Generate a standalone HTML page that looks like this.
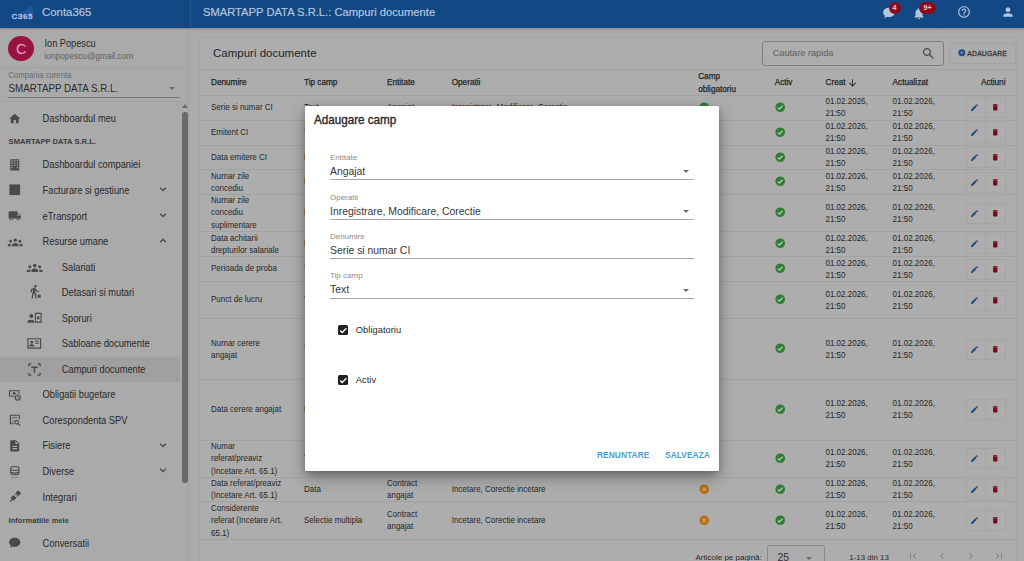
<!DOCTYPE html>
<html><head><meta charset="utf-8"><style>
*{margin:0;padding:0;box-sizing:border-box}
html,body{width:1024px;height:561px;overflow:hidden;background:#ababab;font-family:"Liberation Sans",sans-serif;color:#222}
.a{position:absolute;white-space:nowrap}
svg{position:absolute;overflow:visible}
#hdr{position:absolute;left:0;top:0;width:1024px;height:28px;background:#124884;box-shadow:0 1px 2px rgba(0,0,0,.22);z-index:2}
.hsep{position:absolute;top:0;width:1px;height:28px;background:#2a5689}
.ht{color:#b4c6de;-webkit-text-stroke:0.2px #b4c6de}
#side{position:absolute;left:0;top:28px;width:189px;height:533px;background:#aaaaaa;border-right:1px solid #a2a2a2}
.mi{position:absolute;left:42.6px;font-size:9.3px;line-height:12px;color:#282828;white-space:nowrap;transform:scaleY(1.13);transform-origin:50% 50%}
.si{position:absolute;left:61.8px;font-size:9.3px;line-height:12px;color:#282828;white-space:nowrap;transform:scaleY(1.13);transform-origin:50% 50%}
.sec{position:absolute;left:8.6px;font-size:7.6px;line-height:10px;font-weight:bold;color:#3c3c3c;white-space:nowrap}
#card{position:absolute;left:200px;top:38px;width:816px;height:530px;background:#adadad;box-shadow:0 0 1px rgba(0,0,0,.2)}
.hl{position:absolute;height:1px;background:#a2a2a2}
.th{position:absolute;font-size:8.2px;line-height:12px;font-weight:normal;-webkit-text-stroke:0.25px #262626;color:#262626;white-space:nowrap}
.td{position:absolute;font-size:8px;line-height:12px;color:#2a2a2a;white-space:nowrap}
.tdc{line-height:11px;transform:scaleY(1.13);transform-origin:50% 50%;color:#262626}
.act{position:absolute;left:966px;width:40px;height:21px;border:1px solid #a4a4a4;border-radius:2px}
.act i{position:absolute;left:17.5px;top:0;width:1px;height:19px;background:#a4a4a4}
#modal{position:absolute;left:305px;top:106px;width:414.2px;height:365px;background:#fff;border-radius:1.5px;box-shadow:0 6px 16px rgba(0,0,0,.35),0 2px 5px rgba(0,0,0,.2)}
.ml{position:absolute;left:25px;font-size:8px;line-height:10px;color:#8a8a8a;white-space:nowrap}
.mv{position:absolute;left:25px;font-size:10.4px;line-height:14px;color:#363636;white-space:nowrap}
.mu{position:absolute;left:25px;width:364px;height:1px;background:#a6a6a6}
.arr{position:absolute;left:378.3px;width:0;height:0;border-left:3.5px solid transparent;border-right:3.5px solid transparent;border-top:3.5px solid #6a6a6a}
</style></head><body>
<div id="hdr">
<svg style="left:11px;top:5px" width="23" height="15" viewBox="0 0 23 15">
<path fill="#1b58a2" d="M5 8.5q6-1 10-4t7-4V8.5z"/>
<text x="0.6" y="14.2" font-family="Liberation Sans" font-weight="bold" font-size="8.1" fill="#b4b8ec" stroke="#b4b8ec" stroke-width="0.3" textLength="21" lengthAdjust="spacing">C365</text></svg>
<div class="a ht" style="left:42px;top:5px;font-size:11.4px;line-height:14px">Conta365</div>
<div class="hsep" style="left:189.5px"></div>
<div class="a ht" style="left:203px;top:5px;font-size:11.2px;line-height:14px">SMARTAPP DATA S.R.L.: Campuri documente</div>
<svg style="left:882px;top:6px" width="14" height="14" viewBox="0 0 24 24"><path fill="#b4c6de" d="M12 3C6.5 3 2 6.6 2 11c0 2.3 1.2 4.3 3.1 5.8L4 21l4.6-2.4c1.1.3 2.2.4 3.4.4 5.5 0 10-3.6 10-8S17.5 3 12 3z"/></svg>
<div class="a" style="left:888.5px;top:2px;width:12px;height:11.5px;border-radius:6px;background:#8a0b1c;color:#e4cdd2;font-size:7.2px;font-weight:bold;line-height:11.5px;text-align:center">4</div>
<svg style="left:912px;top:6px" width="14" height="15" viewBox="0 0 24 24"><path fill="#b4c6de" d="M12 22c1.1 0 2-.9 2-2h-4c0 1.1.9 2 2 2zm6-6v-5c0-3.1-1.6-5.6-4.5-6.3V4c0-.8-.7-1.5-1.5-1.5s-1.5.7-1.5 1.5v.7C7.6 5.4 6 7.9 6 11v5l-2 2v1h16v-1l-2-2z"/></svg>
<div class="a" style="left:919.3px;top:2px;width:16.8px;height:11.5px;border-radius:6px;background:#8a0b1c;color:#e4cdd2;font-size:7.2px;font-weight:bold;line-height:11.5px;text-align:center">9+</div>
<div class="hsep" style="left:943px;background:#194c86"></div>
<svg style="left:957px;top:5px" width="14" height="14" viewBox="0 0 24 24"><path fill="#b4c6de" d="M11 18h2v-2h-2v2zm1-16C6.5 2 2 6.5 2 12s4.5 10 10 10 10-4.5 10-10S17.5 2 12 2zm0 18c-4.4 0-8-3.6-8-8s3.6-8 8-8 8 3.6 8 8-3.6 8-8 8zm0-14c-2.2 0-4 1.8-4 4h2c0-1.1.9-2 2-2s2 .9 2 2c0 2-3 1.8-3 5h2c0-2.3 3-2.5 3-5 0-2.2-1.8-4-4-4z"/></svg>
<div class="hsep" style="left:987px;background:#194c86"></div>
<svg style="left:1001px;top:5px" width="14" height="14" viewBox="0 0 24 24"><path fill="#b4c6de" d="M12 12c2.2 0 4-1.8 4-4s-1.8-4-4-4-4 1.8-4 4 1.8 4 4 4zm0 2c-2.7 0-8 1.3-8 4v2h16v-2c0-2.7-5.3-4-8-4z"/></svg>
</div>
<div id="side"></div>
<div class="a" style="left:8.4px;top:35.8px;width:25.5px;height:25.5px;border-radius:50%;background:#9a1240;color:#dca6c4;font-size:14.5px;line-height:27px;text-align:center">C</div>
<div class="mi" style="left:44.5px;top:38.30px;font-size:9.2px">Ion Popescu</div>
<div class="mi" style="left:44.5px;top:49.50px;font-size:8.3px;color:#606060">ionpopescu@gmail.com</div>
<div class="hl" style="left:0;top:67px;width:189px"></div>
<div class="mi" style="left:8.5px;top:70.30px;font-size:7.7px;color:#6a6a6a">Compania curenta</div>
<div class="mi" style="left:8.5px;top:83.40px;font-size:9.8px;color:#2a2a2a">SMARTAPP DATA S.R.L.</div>
<div class="arr" style="left:168.5px;top:87.3px"></div>
<div class="hl" style="left:8px;top:97px;width:172px;background:#7a7a7a"></div>
<div class="hl" style="left:0;top:101px;width:189px"></div>
<div class="a" style="left:181.8px;top:103.5px;width:0;height:0;border-left:3px solid transparent;border-right:3px solid transparent;border-bottom:4px solid #6a6a6a"></div>
<div class="a" style="left:182.3px;top:112px;width:5.6px;height:371px;border-radius:2.8px;background:#6a6a6a"></div>
<div class="a" style="left:0;top:356.6px;width:180px;height:25.6px;background:#a0a0a0"></div>
<div class="mi" style="left:42.6px;top:113.30px;">Dashboardul meu</div>
<svg style="left:8.45px;top:111.85px" width="13.5" height="13.5" viewBox="0 0 24 24"><path fill="#4a4a4a" fill-rule="evenodd" d="M10 20v-6h4v6h5v-8h3L12 3 2 12h3v8z"/></svg>
<div class="sec" style="left:8.6px;top:137.25px;">SMARTAPP DATA S.R.L.</div>
<div class="mi" style="left:42.6px;top:159.30px;">Dashboardul companiei</div>
<svg style="left:8.45px;top:157.85px" width="13.5" height="13.5" viewBox="0 0 24 24"><path fill="#4a4a4a" fill-rule="evenodd" d="M4 2h16v20H4z M6 4v2h2.5V4z M10.75 4v2h2.5V4z M15.5 4v2H18V4z M6 8v2h2.5V8z M10.75 8v2h2.5V8z M15.5 8v2H18V8z M6 12v2h2.5v-2z M10.75 12v2h2.5v-2z M15.5 12v2H18v-2z M6 16v2h2.5v-2z M15.5 16v2H18v-2z"/></svg>
<div class="mi" style="left:42.6px;top:184.70px;">Facturare si gestiune</div>
<svg style="left:8.45px;top:183.25px" width="13.5" height="13.5" viewBox="0 0 24 24"><path fill="#4a4a4a" fill-rule="evenodd" d="M2.5 2.5h19v19h-19z"/></svg>
<svg style="left:158.3px;top:184.00px" width="10" height="12" viewBox="0 0 12 12"><path fill="none" stroke="#4e4e4e" stroke-width="1.7" d="M2.5 3.2l3.5 3.5 3.5-3.5"/></svg>
<div class="mi" style="left:42.6px;top:210.50px;">eTransport</div>
<svg style="left:8.45px;top:209.05px" width="13.5" height="13.5" viewBox="0 0 24 24"><path fill="#4a4a4a" fill-rule="evenodd" d="M20 8h-3V4H3c-1.1 0-2 .9-2 2v11h2c0 1.7 1.3 3 3 3s3-1.3 3-3h6c0 1.7 1.3 3 3 3s3-1.3 3-3h2v-5l-3-4zM6 18.5c-.8 0-1.5-.7-1.5-1.5s.7-1.5 1.5-1.5 1.5.7 1.5 1.5-.7 1.5-1.5 1.5zm13.5-9l2 2.5H17V9.5h2.5zm-1.5 9c-.8 0-1.5-.7-1.5-1.5s.7-1.5 1.5-1.5 1.5.7 1.5 1.5-.7 1.5-1.5 1.5z"/></svg>
<svg style="left:158.3px;top:209.80px" width="10" height="12" viewBox="0 0 12 12"><path fill="none" stroke="#4e4e4e" stroke-width="1.7" d="M2.5 3.2l3.5 3.5 3.5-3.5"/></svg>
<div class="mi" style="left:42.6px;top:235.90px;">Resurse umane</div>
<svg style="left:7.25px;top:232.95px" width="16.5" height="16.5" viewBox="0 0 24 24"><path fill="#4a4a4a" fill-rule="evenodd" d="M12 7.9a2.5 2.5 0 1 1 0 5 2.5 2.5 0 0 1 0-5zM5.3 9.9a2.1 2.1 0 1 1 0 4.2 2.1 2.1 0 0 1 0-4.2zM18.7 9.9a2.1 2.1 0 1 1 0 4.2 2.1 2.1 0 0 1 0-4.2zM7.2 19.3v-1.2c0-2.1 2.1-3.6 4.8-3.6s4.8 1.5 4.8 3.6v1.2zM1 19.3v-.9c0-1.4 1.4-2.6 3.6-2.6.6 0 1.2.1 1.7.3-.5.6-.8 1.4-.8 2.3v.9zM23 19.3v-.9c0-1.4-1.4-2.6-3.6-2.6-.6 0-1.2.1-1.7.3.5.6.8 1.4.8 2.3v.9z"/></svg>
<svg style="left:158.3px;top:235.20px" width="10" height="12" viewBox="0 0 12 12"><path fill="none" stroke="#4e4e4e" stroke-width="1.7" d="M2.5 7.5l3.5-3.5 3.5 3.5"/></svg>
<div class="si" style="left:61.8px;top:261.50px;">Salariati</div>
<svg style="left:26.15px;top:258.05px" width="17.5" height="17.5" viewBox="0 0 24 24"><path fill="#4a4a4a" fill-rule="evenodd" d="M12 7.9a2.5 2.5 0 1 1 0 5 2.5 2.5 0 0 1 0-5zM5.3 9.9a2.1 2.1 0 1 1 0 4.2 2.1 2.1 0 0 1 0-4.2zM18.7 9.9a2.1 2.1 0 1 1 0 4.2 2.1 2.1 0 0 1 0-4.2zM7.2 19.3v-1.2c0-2.1 2.1-3.6 4.8-3.6s4.8 1.5 4.8 3.6v1.2zM1 19.3v-.9c0-1.4 1.4-2.6 3.6-2.6.6 0 1.2.1 1.7.3-.5.6-.8 1.4-.8 2.3v.9zM23 19.3v-.9c0-1.4-1.4-2.6-3.6-2.6-.6 0-1.2.1-1.7.3.5.6.8 1.4.8 2.3v.9z"/></svg>
<div class="si" style="left:61.8px;top:286.60px;">Detasari si mutari</div>
<svg style="left:27.10px;top:284.40px" width="15" height="15" viewBox="0 0 24 24"><path fill="#4a4a4a" fill-rule="evenodd" d="M13.5 5.5c1.1 0 2-.9 2-2s-.9-2-2-2-2 .9-2 2 .9 2 2 2zM9.8 8.9L7 23h2.1l1.8-8 2.1 2v6h2v-7.5l-2.1-2 .6-3C14.8 12 16.8 13 19 13v-2c-1.9 0-3.5-1-4.3-2.4l-1-1.6c-.4-.6-1-1-1.7-1-.3 0-.5.1-.8.1L6 8.3V13h2V9.6l1.8-.7 M17 17h5v5h-5z"/></svg>
<div class="si" style="left:61.8px;top:312.70px;">Sporuri</div>
<svg style="left:27.10px;top:310.50px" width="15" height="15" viewBox="0 0 24 24"><path fill="#4a4a4a" fill-rule="evenodd" d="M7 4.8a3.2 3.2 0 1 1 0 6.4 3.2 3.2 0 0 1 0-6.4zM0.6 18.6v-1.4c0-2.2 3-3.4 5.6-3.4s5.4 1.2 5.4 3.4v1.4zM12.6 2.9h10.8v15.7H12.6zM14.4 4.7v12.1h7.2V4.7zM17.9 7.6l2.6 3.4-2.6 3.4-2.6-3.4z"/></svg>
<div class="si" style="left:61.8px;top:338.30px;">Sabloane documente</div>
<svg style="left:27.10px;top:336.10px" width="15" height="15" viewBox="0 0 24 24"><path fill="#4a4a4a" fill-rule="evenodd" d="M0.6 3.4h22.1v16.9H0.6zM2.4 5.2v13.3h18.5V5.2zM7.6 7.6a2.3 2.3 0 1 1 0 4.6 2.3 2.3 0 0 1 0-4.6zM3.6 16.8v-1.1c0-1.7 2.6-2.6 4-2.6s4 .9 4 2.6v1.1zM13.3 7.6h5.6v1.6h-5.6zM13.3 10.6h5.6v1.6h-5.6z"/></svg>
<div class="si" style="left:61.8px;top:363.70px;">Campuri documente</div>
<svg style="left:27.10px;top:361.50px" width="15" height="15" viewBox="0 0 24 24"><path fill="#4a4a4a" fill-rule="evenodd" d="M2 4c0-1.1.9-2 2-2h3v2H4v3H2zM17 2h3c1.1 0 2 .9 2 2v3h-2V4h-3zM2 17h2v3h3v2H4c-1.1 0-2-.9-2-2zM20 17h2v3c0 1.1-.9 2-2 2h-3v-2h3zM7 7h10v2.5h-3.8V17h-2.4V9.5H7z"/></svg>
<div class="mi" style="left:42.6px;top:389.30px;">Obligatii bugetare</div>
<svg style="left:8.45px;top:387.85px" width="13.5" height="13.5" viewBox="0 0 24 24"><g fill="none" stroke="#4a4a4a" stroke-width="2"><path d="M2.7 14.7V4.8h16.7v5.2M2.7 14.7h7.8"/><circle cx="17.2" cy="17" r="4.6"/><path stroke-width="1.6" d="M17.2 14.6v2.9h2.1"/></g><circle cx="10.9" cy="9.6" r="2.6" fill="#4a4a4a"/></svg>
<div class="mi" style="left:42.6px;top:414.70px;">Corespondenta SPV</div>
<svg style="left:8.45px;top:413.25px" width="13.5" height="13.5" viewBox="0 0 24 24"><g fill="none" stroke="#4a4a4a" stroke-width="2"><path d="M20.1 11.5V4.1H4.3v15.1h5.6"/><circle cx="15.4" cy="16.4" r="3.3"/><path d="M17.8 18.9l4 3.6"/></g><path fill="#4a4a4a" d="M8 6.9h8.8v1.7H8zM7 9.8h2.4v1.5H7zM7 14.8h2.4v1.5H7z"/></svg>
<div class="mi" style="left:42.6px;top:440.20px;">Fisiere</div>
<svg style="left:8.45px;top:438.75px" width="13.5" height="13.5" viewBox="0 0 24 24"><path fill="#4a4a4a" fill-rule="evenodd" d="M14 2H6c-1.1 0-2 .9-2 2v16c0 1.1.9 2 2 2h12c1.1 0 2-.9 2-2V8l-6-6zm2 16H8v-2h8v2zm0-4H8v-2h8v2zm-3-5V3.5L18.5 9H13z"/></svg>
<svg style="left:158.3px;top:439.50px" width="10" height="12" viewBox="0 0 12 12"><path fill="none" stroke="#4e4e4e" stroke-width="1.7" d="M2.5 3.2l3.5 3.5 3.5-3.5"/></svg>
<div class="mi" style="left:42.6px;top:465.70px;">Diverse</div>
<svg style="left:8.45px;top:464.25px" width="13.5" height="13.5" viewBox="0 0 24 24"><g fill="none" stroke="#4a4a4a" stroke-width="2"><rect x="4.8" y="4.8" width="14.6" height="14.4" rx="3.2"/><path d="M4.8 10.2q7.3 2.6 14.6 0M4.8 14.9q7.3 2.6 14.6 0"/></g><path fill="#4a4a4a" d="M6.5 23h2.2v1.6H6.5zM11 23h2.2v1.6H11zM15.5 23h2.2v1.6h-2.2z"/></svg>
<svg style="left:158.3px;top:465.00px" width="10" height="12" viewBox="0 0 12 12"><path fill="none" stroke="#4e4e4e" stroke-width="1.7" d="M2.5 3.2l3.5 3.5 3.5-3.5"/></svg>
<div class="mi" style="left:42.6px;top:491.70px;">Integrari</div>
<svg style="left:8.45px;top:490.25px" width="13.5" height="13.5" viewBox="0 0 24 24"><g transform="rotate(45 12 12)" fill="#4a4a4a"><rect x="8.2" y="-0.5" width="7.6" height="7" rx="1.2"/><rect x="9.3" y="6.3" width="1.7" height="3.2"/><rect x="13" y="6.3" width="1.7" height="3.2"/><rect x="8.2" y="11.5" width="7.6" height="7.5" rx="1.2"/><rect x="11" y="18.5" width="2" height="5.5"/></g></svg>
<div class="sec" style="left:8.6px;top:516.10px;">Informatiile mele</div>
<div class="mi" style="left:42.6px;top:537.70px;">Conversatii</div>
<svg style="left:8.45px;top:536.25px" width="13.5" height="13.5" viewBox="0 0 24 24"><path fill="#4a4a4a" fill-rule="evenodd" d="M12 3C6.5 3 2 6.6 2 11c0 2.3 1.2 4.3 3.1 5.8L4 21l4.6-2.4c1.1.3 2.2.4 3.4.4 5.5 0 10-3.6 10-8S17.5 3 12 3z"/></svg>
<div id="card"></div>
<div class="a" style="left:213px;top:45.9px;font-size:11.5px;line-height:15px;color:#262626">Campuri documente</div>
<div class="a" style="left:762px;top:41.2px;width:181.5px;height:25px;border:1px solid #7e7e7e;border-radius:3px"></div>
<div class="td" style="left:772.7px;top:47.30px;font-size:9.2px;color:#606060">Cautare rapida</div>
<svg style="left:920.5px;top:46px" width="15" height="15" viewBox="0 0 24 24"><path fill="#4a4a4a" d="M15.5 14h-.8l-.3-.3c1-1.1 1.6-2.6 1.6-4.2C16 5.9 13.1 3 9.5 3S3 5.9 3 9.5 5.9 16 9.5 16c1.6 0 3.1-.6 4.2-1.6l.3.3v.8l5 5 1.5-1.5-5-5zm-6 0C7 14 5 12 5 9.5S7 5 9.5 5 14 7 14 9.5 12 14 9.5 14z"/></svg>
<div class="a" style="left:949px;top:43.4px;width:66.5px;height:21px;border:1px solid #a3a3a3;border-radius:2px"></div>
<svg style="left:958.2px;top:49.2px" width="7.6" height="7.6" viewBox="0 0 24 24"><circle cx="12" cy="12" r="11" fill="#1e4f86"/><path fill="#adadad" d="M11 6h2v5h5v2h-5v5h-2v-5H6v-2h5z"/></svg>
<div class="th" style="left:967.3px;top:48.00px;font-size:6.8px;letter-spacing:0.2px;color:#383838;-webkit-text-stroke:0.3px #383838">ADAUGARE</div>
<div class="hl" style="left:200px;top:69px;width:816px"></div>
<div class="th" style="left:211px;top:76.80px;">Denumire</div>
<div class="th" style="left:304px;top:76.80px;">Tip camp</div>
<div class="th" style="left:387px;top:76.80px;">Entitate</div>
<div class="th" style="left:451.7px;top:76.80px;">Operatii</div>
<div class="th" style="left:698.2px;top:70.50px;">Camp</div>
<div class="th" style="left:698.2px;top:83.50px;">obligatoriu</div>
<div class="th" style="left:774.7px;top:76.80px;">Activ</div>
<div class="th" style="left:825.5px;top:76.80px;">Creat</div>
<svg style="left:846.5px;top:76.5px" width="11" height="12" viewBox="0 0 24 24"><path fill="#262626" d="M20 12l-1.4-1.4-5.6 5.6V4h-2v12.2l-5.6-5.6L4 12l8 8z"/></svg>
<div class="th" style="left:892.6px;top:76.80px;">Actualizat</div>
<div class="th" style="left:950px;top:76.8px;width:55.5px;text-align:right">Actiuni</div>
<div class="hl" style="left:200px;top:95px;width:816px"></div>
<div class="td tdc" style="left:211px;top:101.75px">Serie si numar CI</div>
<div class="td tdc" style="left:304px;top:101.75px">Text</div>
<div class="td tdc" style="left:387px;top:101.75px">Angajat</div>
<div class="td tdc" style="left:451.7px;top:101.75px">Inregistrare, Modificare, Corectie</div>
<svg style="left:698.75px;top:101.95px" width="10.5" height="10.5" viewBox="0 0 24 24"><circle cx="12" cy="12" r="11" fill="#317b36"/><path fill="none" stroke="#a6cca6" stroke-width="3" d="M6.5 12.5l3.5 3.5 7.5-7.5"/></svg>
<svg style="left:774.95px;top:101.95px" width="10.5" height="10.5" viewBox="0 0 24 24"><circle cx="12" cy="12" r="11" fill="#317b36"/><path fill="none" stroke="#a6cca6" stroke-width="3" d="M6.5 12.5l3.5 3.5 7.5-7.5"/></svg>
<div class="td tdc" style="left:825.5px;top:96.25px">01.02.2026,<br>21:50</div>
<div class="td tdc" style="left:892.6px;top:96.25px">01.02.2026,<br>21:50</div>
<div class="act" style="top:97.15px"><i></i></div>
<svg style="left:969.5px;top:103.15px" width="9" height="9" viewBox="0 0 24 24"><path fill="#234a7c" d="M3 17.3V21h3.7L17.8 9.9l-3.7-3.7zM20.7 7c.4-.4.4-1 0-1.4l-2.3-2.3c-.4-.4-1-.4-1.4 0l-1.8 1.8 3.7 3.7z"/></svg>
<svg style="left:991.1px;top:103.25px" width="8.5" height="8.5" viewBox="0 0 24 24"><path fill="#750a1e" d="M6 19c0 1.1.9 2 2 2h8c1.1 0 2-.9 2-2V7H6v12zM19 4h-3.5l-1-1h-5l-1 1H5v2h14V4z"/></svg>
<div class="hl" style="left:200px;top:119.80px;width:816px"></div>
<div class="td tdc" style="left:211px;top:126.90px">Emitent CI</div>
<div class="td tdc" style="left:304px;top:126.90px">Text</div>
<div class="td tdc" style="left:387px;top:126.90px">Angajat</div>
<div class="td tdc" style="left:451.7px;top:126.90px">Inregistrare, Modificare, Corectie</div>
<svg style="left:698.75px;top:127.10px" width="10.5" height="10.5" viewBox="0 0 24 24"><circle cx="12" cy="12" r="11" fill="#317b36"/><path fill="none" stroke="#a6cca6" stroke-width="3" d="M6.5 12.5l3.5 3.5 7.5-7.5"/></svg>
<svg style="left:774.95px;top:127.10px" width="10.5" height="10.5" viewBox="0 0 24 24"><circle cx="12" cy="12" r="11" fill="#317b36"/><path fill="none" stroke="#a6cca6" stroke-width="3" d="M6.5 12.5l3.5 3.5 7.5-7.5"/></svg>
<div class="td tdc" style="left:825.5px;top:121.40px">01.02.2026,<br>21:50</div>
<div class="td tdc" style="left:892.6px;top:121.40px">01.02.2026,<br>21:50</div>
<div class="act" style="top:122.30px"><i></i></div>
<svg style="left:969.5px;top:128.30px" width="9" height="9" viewBox="0 0 24 24"><path fill="#234a7c" d="M3 17.3V21h3.7L17.8 9.9l-3.7-3.7zM20.7 7c.4-.4.4-1 0-1.4l-2.3-2.3c-.4-.4-1-.4-1.4 0l-1.8 1.8 3.7 3.7z"/></svg>
<svg style="left:991.1px;top:128.40px" width="8.5" height="8.5" viewBox="0 0 24 24"><path fill="#750a1e" d="M6 19c0 1.1.9 2 2 2h8c1.1 0 2-.9 2-2V7H6v12zM19 4h-3.5l-1-1h-5l-1 1H5v2h14V4z"/></svg>
<div class="hl" style="left:200px;top:144.80px;width:816px"></div>
<div class="td tdc" style="left:211px;top:151.65px">Data emitere CI</div>
<div class="td tdc" style="left:304px;top:151.65px">Data</div>
<div class="td tdc" style="left:387px;top:151.65px">Angajat</div>
<div class="td tdc" style="left:451.7px;top:151.65px">Inregistrare, Modificare, Corectie</div>
<svg style="left:698.75px;top:151.85px" width="10.5" height="10.5" viewBox="0 0 24 24"><circle cx="12" cy="12" r="11" fill="#317b36"/><path fill="none" stroke="#a6cca6" stroke-width="3" d="M6.5 12.5l3.5 3.5 7.5-7.5"/></svg>
<svg style="left:774.95px;top:151.85px" width="10.5" height="10.5" viewBox="0 0 24 24"><circle cx="12" cy="12" r="11" fill="#317b36"/><path fill="none" stroke="#a6cca6" stroke-width="3" d="M6.5 12.5l3.5 3.5 7.5-7.5"/></svg>
<div class="td tdc" style="left:825.5px;top:146.15px">01.02.2026,<br>21:50</div>
<div class="td tdc" style="left:892.6px;top:146.15px">01.02.2026,<br>21:50</div>
<div class="act" style="top:147.05px"><i></i></div>
<svg style="left:969.5px;top:153.05px" width="9" height="9" viewBox="0 0 24 24"><path fill="#234a7c" d="M3 17.3V21h3.7L17.8 9.9l-3.7-3.7zM20.7 7c.4-.4.4-1 0-1.4l-2.3-2.3c-.4-.4-1-.4-1.4 0l-1.8 1.8 3.7 3.7z"/></svg>
<svg style="left:991.1px;top:153.15px" width="8.5" height="8.5" viewBox="0 0 24 24"><path fill="#750a1e" d="M6 19c0 1.1.9 2 2 2h8c1.1 0 2-.9 2-2V7H6v12zM19 4h-3.5l-1-1h-5l-1 1H5v2h14V4z"/></svg>
<div class="hl" style="left:200px;top:169.30px;width:816px"></div>
<div class="td tdc" style="left:211px;top:170.75px">Numar zile<br>concediu</div>
<div class="td tdc" style="left:304px;top:176.25px">Numar</div>
<div class="td tdc" style="left:387px;top:176.25px">Angajat</div>
<div class="td tdc" style="left:451.7px;top:176.25px">Inregistrare, Modificare, Corectie</div>
<svg style="left:698.75px;top:176.45px" width="10.5" height="10.5" viewBox="0 0 24 24"><circle cx="12" cy="12" r="11" fill="#317b36"/><path fill="none" stroke="#a6cca6" stroke-width="3" d="M6.5 12.5l3.5 3.5 7.5-7.5"/></svg>
<svg style="left:774.95px;top:176.45px" width="10.5" height="10.5" viewBox="0 0 24 24"><circle cx="12" cy="12" r="11" fill="#317b36"/><path fill="none" stroke="#a6cca6" stroke-width="3" d="M6.5 12.5l3.5 3.5 7.5-7.5"/></svg>
<div class="td tdc" style="left:825.5px;top:170.75px">01.02.2026,<br>21:50</div>
<div class="td tdc" style="left:892.6px;top:170.75px">01.02.2026,<br>21:50</div>
<div class="act" style="top:171.65px"><i></i></div>
<svg style="left:969.5px;top:177.65px" width="9" height="9" viewBox="0 0 24 24"><path fill="#234a7c" d="M3 17.3V21h3.7L17.8 9.9l-3.7-3.7zM20.7 7c.4-.4.4-1 0-1.4l-2.3-2.3c-.4-.4-1-.4-1.4 0l-1.8 1.8 3.7 3.7z"/></svg>
<svg style="left:991.1px;top:177.75px" width="8.5" height="8.5" viewBox="0 0 24 24"><path fill="#750a1e" d="M6 19c0 1.1.9 2 2 2h8c1.1 0 2-.9 2-2V7H6v12zM19 4h-3.5l-1-1h-5l-1 1H5v2h14V4z"/></svg>
<div class="hl" style="left:200px;top:194.00px;width:816px"></div>
<div class="td tdc" style="left:211px;top:196.10px">Numar zile<br>concediu<br>suplimentare</div>
<div class="td tdc" style="left:304px;top:207.10px">Numar</div>
<div class="td tdc" style="left:387px;top:207.10px">Angajat</div>
<div class="td tdc" style="left:451.7px;top:207.10px">Inregistrare, Modificare, Corectie</div>
<svg style="left:698.75px;top:207.30px" width="10.5" height="10.5" viewBox="0 0 24 24"><circle cx="12" cy="12" r="11" fill="#317b36"/><path fill="none" stroke="#a6cca6" stroke-width="3" d="M6.5 12.5l3.5 3.5 7.5-7.5"/></svg>
<svg style="left:774.95px;top:207.30px" width="10.5" height="10.5" viewBox="0 0 24 24"><circle cx="12" cy="12" r="11" fill="#317b36"/><path fill="none" stroke="#a6cca6" stroke-width="3" d="M6.5 12.5l3.5 3.5 7.5-7.5"/></svg>
<div class="td tdc" style="left:825.5px;top:201.60px">01.02.2026,<br>21:50</div>
<div class="td tdc" style="left:892.6px;top:201.60px">01.02.2026,<br>21:50</div>
<div class="act" style="top:202.50px"><i></i></div>
<svg style="left:969.5px;top:208.50px" width="9" height="9" viewBox="0 0 24 24"><path fill="#234a7c" d="M3 17.3V21h3.7L17.8 9.9l-3.7-3.7zM20.7 7c.4-.4.4-1 0-1.4l-2.3-2.3c-.4-.4-1-.4-1.4 0l-1.8 1.8 3.7 3.7z"/></svg>
<svg style="left:991.1px;top:208.60px" width="8.5" height="8.5" viewBox="0 0 24 24"><path fill="#750a1e" d="M6 19c0 1.1.9 2 2 2h8c1.1 0 2-.9 2-2V7H6v12zM19 4h-3.5l-1-1h-5l-1 1H5v2h14V4z"/></svg>
<div class="hl" style="left:200px;top:231.00px;width:816px"></div>
<div class="td tdc" style="left:211px;top:232.55px">Data achitarii<br>drepturilor salariale</div>
<div class="td tdc" style="left:304px;top:238.05px">Data</div>
<div class="td tdc" style="left:387px;top:238.05px">Angajat</div>
<div class="td tdc" style="left:451.7px;top:238.05px">Inregistrare, Modificare, Corectie</div>
<svg style="left:698.75px;top:238.25px" width="10.5" height="10.5" viewBox="0 0 24 24"><circle cx="12" cy="12" r="11" fill="#317b36"/><path fill="none" stroke="#a6cca6" stroke-width="3" d="M6.5 12.5l3.5 3.5 7.5-7.5"/></svg>
<svg style="left:774.95px;top:238.25px" width="10.5" height="10.5" viewBox="0 0 24 24"><circle cx="12" cy="12" r="11" fill="#317b36"/><path fill="none" stroke="#a6cca6" stroke-width="3" d="M6.5 12.5l3.5 3.5 7.5-7.5"/></svg>
<div class="td tdc" style="left:825.5px;top:232.55px">01.02.2026,<br>21:50</div>
<div class="td tdc" style="left:892.6px;top:232.55px">01.02.2026,<br>21:50</div>
<div class="act" style="top:233.45px"><i></i></div>
<svg style="left:969.5px;top:239.45px" width="9" height="9" viewBox="0 0 24 24"><path fill="#234a7c" d="M3 17.3V21h3.7L17.8 9.9l-3.7-3.7zM20.7 7c.4-.4.4-1 0-1.4l-2.3-2.3c-.4-.4-1-.4-1.4 0l-1.8 1.8 3.7 3.7z"/></svg>
<svg style="left:991.1px;top:239.55px" width="8.5" height="8.5" viewBox="0 0 24 24"><path fill="#750a1e" d="M6 19c0 1.1.9 2 2 2h8c1.1 0 2-.9 2-2V7H6v12zM19 4h-3.5l-1-1h-5l-1 1H5v2h14V4z"/></svg>
<div class="hl" style="left:200px;top:255.90px;width:816px"></div>
<div class="td tdc" style="left:211px;top:263.10px">Perioada de proba</div>
<div class="td tdc" style="left:304px;top:263.10px">Text</div>
<div class="td tdc" style="left:387px;top:263.10px">Angajat</div>
<div class="td tdc" style="left:451.7px;top:263.10px">Inregistrare, Modificare, Corectie</div>
<svg style="left:698.75px;top:263.30px" width="10.5" height="10.5" viewBox="0 0 24 24"><circle cx="12" cy="12" r="11" fill="#317b36"/><path fill="none" stroke="#a6cca6" stroke-width="3" d="M6.5 12.5l3.5 3.5 7.5-7.5"/></svg>
<svg style="left:774.95px;top:263.30px" width="10.5" height="10.5" viewBox="0 0 24 24"><circle cx="12" cy="12" r="11" fill="#317b36"/><path fill="none" stroke="#a6cca6" stroke-width="3" d="M6.5 12.5l3.5 3.5 7.5-7.5"/></svg>
<div class="td tdc" style="left:825.5px;top:257.60px">01.02.2026,<br>21:50</div>
<div class="td tdc" style="left:892.6px;top:257.60px">01.02.2026,<br>21:50</div>
<div class="act" style="top:258.50px"><i></i></div>
<svg style="left:969.5px;top:264.50px" width="9" height="9" viewBox="0 0 24 24"><path fill="#234a7c" d="M3 17.3V21h3.7L17.8 9.9l-3.7-3.7zM20.7 7c.4-.4.4-1 0-1.4l-2.3-2.3c-.4-.4-1-.4-1.4 0l-1.8 1.8 3.7 3.7z"/></svg>
<svg style="left:991.1px;top:264.60px" width="8.5" height="8.5" viewBox="0 0 24 24"><path fill="#750a1e" d="M6 19c0 1.1.9 2 2 2h8c1.1 0 2-.9 2-2V7H6v12zM19 4h-3.5l-1-1h-5l-1 1H5v2h14V4z"/></svg>
<div class="hl" style="left:200px;top:281.10px;width:816px"></div>
<div class="td tdc" style="left:211px;top:294.25px">Punct de lucru</div>
<div class="td tdc" style="left:304px;top:294.25px">Text</div>
<div class="td tdc" style="left:387px;top:294.25px">Angajat</div>
<div class="td tdc" style="left:451.7px;top:294.25px">Inregistrare, Modificare, Corectie</div>
<svg style="left:698.75px;top:294.45px" width="10.5" height="10.5" viewBox="0 0 24 24"><circle cx="12" cy="12" r="11" fill="#317b36"/><path fill="none" stroke="#a6cca6" stroke-width="3" d="M6.5 12.5l3.5 3.5 7.5-7.5"/></svg>
<svg style="left:774.95px;top:294.45px" width="10.5" height="10.5" viewBox="0 0 24 24"><circle cx="12" cy="12" r="11" fill="#317b36"/><path fill="none" stroke="#a6cca6" stroke-width="3" d="M6.5 12.5l3.5 3.5 7.5-7.5"/></svg>
<div class="td tdc" style="left:825.5px;top:288.75px">01.02.2026,<br>21:50</div>
<div class="td tdc" style="left:892.6px;top:288.75px">01.02.2026,<br>21:50</div>
<div class="act" style="top:289.65px"><i></i></div>
<svg style="left:969.5px;top:295.65px" width="9" height="9" viewBox="0 0 24 24"><path fill="#234a7c" d="M3 17.3V21h3.7L17.8 9.9l-3.7-3.7zM20.7 7c.4-.4.4-1 0-1.4l-2.3-2.3c-.4-.4-1-.4-1.4 0l-1.8 1.8 3.7 3.7z"/></svg>
<svg style="left:991.1px;top:295.75px" width="8.5" height="8.5" viewBox="0 0 24 24"><path fill="#750a1e" d="M6 19c0 1.1.9 2 2 2h8c1.1 0 2-.9 2-2V7H6v12zM19 4h-3.5l-1-1h-5l-1 1H5v2h14V4z"/></svg>
<div class="hl" style="left:200px;top:318.20px;width:816px"></div>
<div class="td tdc" style="left:211px;top:337.60px">Numar cerere<br>angajat</div>
<div class="td tdc" style="left:304px;top:343.10px">Text</div>
<div class="td tdc" style="left:387px;top:343.10px">Angajat</div>
<div class="td tdc" style="left:451.7px;top:343.10px">Inregistrare, Modificare, Corectie</div>
<svg style="left:698.75px;top:343.30px" width="10.5" height="10.5" viewBox="0 0 24 24"><circle cx="12" cy="12" r="11" fill="#317b36"/><path fill="none" stroke="#a6cca6" stroke-width="3" d="M6.5 12.5l3.5 3.5 7.5-7.5"/></svg>
<svg style="left:774.95px;top:343.30px" width="10.5" height="10.5" viewBox="0 0 24 24"><circle cx="12" cy="12" r="11" fill="#317b36"/><path fill="none" stroke="#a6cca6" stroke-width="3" d="M6.5 12.5l3.5 3.5 7.5-7.5"/></svg>
<div class="td tdc" style="left:825.5px;top:337.60px">01.02.2026,<br>21:50</div>
<div class="td tdc" style="left:892.6px;top:337.60px">01.02.2026,<br>21:50</div>
<div class="act" style="top:338.50px"><i></i></div>
<svg style="left:969.5px;top:344.50px" width="9" height="9" viewBox="0 0 24 24"><path fill="#234a7c" d="M3 17.3V21h3.7L17.8 9.9l-3.7-3.7zM20.7 7c.4-.4.4-1 0-1.4l-2.3-2.3c-.4-.4-1-.4-1.4 0l-1.8 1.8 3.7 3.7z"/></svg>
<svg style="left:991.1px;top:344.60px" width="8.5" height="8.5" viewBox="0 0 24 24"><path fill="#750a1e" d="M6 19c0 1.1.9 2 2 2h8c1.1 0 2-.9 2-2V7H6v12zM19 4h-3.5l-1-1h-5l-1 1H5v2h14V4z"/></svg>
<div class="hl" style="left:200px;top:378.80px;width:816px"></div>
<div class="td tdc" style="left:211px;top:403.90px">Data cerere angajat</div>
<div class="td tdc" style="left:304px;top:403.90px">Data</div>
<div class="td tdc" style="left:387px;top:403.90px">Angajat</div>
<div class="td tdc" style="left:451.7px;top:403.90px">Inregistrare, Modificare, Corectie</div>
<svg style="left:698.75px;top:404.10px" width="10.5" height="10.5" viewBox="0 0 24 24"><circle cx="12" cy="12" r="11" fill="#317b36"/><path fill="none" stroke="#a6cca6" stroke-width="3" d="M6.5 12.5l3.5 3.5 7.5-7.5"/></svg>
<svg style="left:774.95px;top:404.10px" width="10.5" height="10.5" viewBox="0 0 24 24"><circle cx="12" cy="12" r="11" fill="#317b36"/><path fill="none" stroke="#a6cca6" stroke-width="3" d="M6.5 12.5l3.5 3.5 7.5-7.5"/></svg>
<div class="td tdc" style="left:825.5px;top:398.40px">01.02.2026,<br>21:50</div>
<div class="td tdc" style="left:892.6px;top:398.40px">01.02.2026,<br>21:50</div>
<div class="act" style="top:399.30px"><i></i></div>
<svg style="left:969.5px;top:405.30px" width="9" height="9" viewBox="0 0 24 24"><path fill="#234a7c" d="M3 17.3V21h3.7L17.8 9.9l-3.7-3.7zM20.7 7c.4-.4.4-1 0-1.4l-2.3-2.3c-.4-.4-1-.4-1.4 0l-1.8 1.8 3.7 3.7z"/></svg>
<svg style="left:991.1px;top:405.40px" width="8.5" height="8.5" viewBox="0 0 24 24"><path fill="#750a1e" d="M6 19c0 1.1.9 2 2 2h8c1.1 0 2-.9 2-2V7H6v12zM19 4h-3.5l-1-1h-5l-1 1H5v2h14V4z"/></svg>
<div class="hl" style="left:200px;top:439.80px;width:816px"></div>
<div class="td tdc" style="left:211px;top:441.85px">Numar<br>referat/preaviz<br>(Incetare Art. 65.1)</div>
<div class="td tdc" style="left:304px;top:452.85px">Text</div>
<div class="td tdc" style="left:387px;top:447.35px">Contract<br>angajat</div>
<div class="td tdc" style="left:451.7px;top:452.85px">Incetare, Corectie incetare</div>
<svg style="left:698.75px;top:453.05px" width="10.5" height="10.5" viewBox="0 0 24 24"><circle cx="12" cy="12" r="11" fill="#b5701f"/><path fill="none" stroke="#e0a060" stroke-width="2.6" d="M8.5 8.5l7 7M15.5 8.5l-7 7"/></svg>
<svg style="left:774.95px;top:453.05px" width="10.5" height="10.5" viewBox="0 0 24 24"><circle cx="12" cy="12" r="11" fill="#317b36"/><path fill="none" stroke="#a6cca6" stroke-width="3" d="M6.5 12.5l3.5 3.5 7.5-7.5"/></svg>
<div class="td tdc" style="left:825.5px;top:447.35px">01.02.2026,<br>21:50</div>
<div class="td tdc" style="left:892.6px;top:447.35px">01.02.2026,<br>21:50</div>
<div class="act" style="top:448.25px"><i></i></div>
<svg style="left:969.5px;top:454.25px" width="9" height="9" viewBox="0 0 24 24"><path fill="#234a7c" d="M3 17.3V21h3.7L17.8 9.9l-3.7-3.7zM20.7 7c.4-.4.4-1 0-1.4l-2.3-2.3c-.4-.4-1-.4-1.4 0l-1.8 1.8 3.7 3.7z"/></svg>
<svg style="left:991.1px;top:454.35px" width="8.5" height="8.5" viewBox="0 0 24 24"><path fill="#750a1e" d="M6 19c0 1.1.9 2 2 2h8c1.1 0 2-.9 2-2V7H6v12zM19 4h-3.5l-1-1h-5l-1 1H5v2h14V4z"/></svg>
<div class="hl" style="left:200px;top:476.70px;width:816px"></div>
<div class="td tdc" style="left:211px;top:478.10px">Data referat/preaviz<br>(Incetare Art. 65.1)</div>
<div class="td tdc" style="left:304px;top:483.60px">Data</div>
<div class="td tdc" style="left:387px;top:478.10px">Contract<br>angajat</div>
<div class="td tdc" style="left:451.7px;top:483.60px">Incetare, Corectie incetare</div>
<svg style="left:698.75px;top:483.80px" width="10.5" height="10.5" viewBox="0 0 24 24"><circle cx="12" cy="12" r="11" fill="#b5701f"/><path fill="none" stroke="#e0a060" stroke-width="2.6" d="M8.5 8.5l7 7M15.5 8.5l-7 7"/></svg>
<svg style="left:774.95px;top:483.80px" width="10.5" height="10.5" viewBox="0 0 24 24"><circle cx="12" cy="12" r="11" fill="#317b36"/><path fill="none" stroke="#a6cca6" stroke-width="3" d="M6.5 12.5l3.5 3.5 7.5-7.5"/></svg>
<div class="td tdc" style="left:825.5px;top:478.10px">01.02.2026,<br>21:50</div>
<div class="td tdc" style="left:892.6px;top:478.10px">01.02.2026,<br>21:50</div>
<div class="act" style="top:479.00px"><i></i></div>
<svg style="left:969.5px;top:485.00px" width="9" height="9" viewBox="0 0 24 24"><path fill="#234a7c" d="M3 17.3V21h3.7L17.8 9.9l-3.7-3.7zM20.7 7c.4-.4.4-1 0-1.4l-2.3-2.3c-.4-.4-1-.4-1.4 0l-1.8 1.8 3.7 3.7z"/></svg>
<svg style="left:991.1px;top:485.10px" width="8.5" height="8.5" viewBox="0 0 24 24"><path fill="#750a1e" d="M6 19c0 1.1.9 2 2 2h8c1.1 0 2-.9 2-2V7H6v12zM19 4h-3.5l-1-1h-5l-1 1H5v2h14V4z"/></svg>
<div class="hl" style="left:200px;top:501.30px;width:816px"></div>
<div class="td tdc" style="left:211px;top:503.60px">Considerente<br>referat (Incetare Art.<br>65.1)</div>
<div class="td tdc" style="left:304px;top:514.60px">Selectie multipla</div>
<div class="td tdc" style="left:387px;top:509.10px">Contract<br>angajat</div>
<div class="td tdc" style="left:451.7px;top:514.60px">Incetare, Corectie incetare</div>
<svg style="left:698.75px;top:514.80px" width="10.5" height="10.5" viewBox="0 0 24 24"><circle cx="12" cy="12" r="11" fill="#b5701f"/><path fill="none" stroke="#e0a060" stroke-width="2.6" d="M8.5 8.5l7 7M15.5 8.5l-7 7"/></svg>
<svg style="left:774.95px;top:514.80px" width="10.5" height="10.5" viewBox="0 0 24 24"><circle cx="12" cy="12" r="11" fill="#317b36"/><path fill="none" stroke="#a6cca6" stroke-width="3" d="M6.5 12.5l3.5 3.5 7.5-7.5"/></svg>
<div class="td tdc" style="left:825.5px;top:509.10px">01.02.2026,<br>21:50</div>
<div class="td tdc" style="left:892.6px;top:509.10px">01.02.2026,<br>21:50</div>
<div class="act" style="top:510.00px"><i></i></div>
<svg style="left:969.5px;top:516.00px" width="9" height="9" viewBox="0 0 24 24"><path fill="#234a7c" d="M3 17.3V21h3.7L17.8 9.9l-3.7-3.7zM20.7 7c.4-.4.4-1 0-1.4l-2.3-2.3c-.4-.4-1-.4-1.4 0l-1.8 1.8 3.7 3.7z"/></svg>
<svg style="left:991.1px;top:516.10px" width="8.5" height="8.5" viewBox="0 0 24 24"><path fill="#750a1e" d="M6 19c0 1.1.9 2 2 2h8c1.1 0 2-.9 2-2V7H6v12zM19 4h-3.5l-1-1h-5l-1 1H5v2h14V4z"/></svg>
<div class="hl" style="left:200px;top:538.70px;width:816px"></div>
<div class="td" style="left:695.5px;top:551.50px;font-size:8px">Articole pe pagină:</div>
<div class="a" style="left:767.4px;top:545.2px;width:57.8px;height:30px;border:1px solid #8a8a8a;border-radius:3px"></div>
<div class="td" style="left:777.6px;top:552.30px;font-size:10.4px;color:#303030">25</div>
<div class="arr" style="left:805.5px;top:556.5px"></div>
<div class="td" style="left:849.3px;top:551.50px;font-size:7.9px">1-13 din 13</div>
<svg style="left:907.40px;top:550px" width="12" height="12" viewBox="0 0 24 24"><path fill="#858585" d="M18.4 16.6L13.8 12l4.6-4.6L17 6l-6 6 6 6zM6 6h2v12H6z"/></svg>
<svg style="left:936.40px;top:550px" width="12" height="12" viewBox="0 0 24 24"><path fill="#858585" d="M15.4 7.4L14 6l-6 6 6 6 1.4-1.4L10.8 12z"/></svg>
<svg style="left:964.60px;top:550px" width="12" height="12" viewBox="0 0 24 24"><path fill="#858585" d="M10 6L8.6 7.4 13.2 12l-4.6 4.6L10 18l6-6z"/></svg>
<svg style="left:992.70px;top:550px" width="12" height="12" viewBox="0 0 24 24"><path fill="#858585" d="M5.6 7.4L10.2 12l-4.6 4.6L7 18l6-6-6-6zM16 6h2v12h-2z"/></svg>
<div id="modal">
<div class="a" style="left:9px;top:6px;font-size:11.65px;line-height:15px;font-weight:normal;-webkit-text-stroke:0.35px #2a2a2a;color:#2a2a2a;transform:scaleY(1.06);transform-origin:50% 50%">Adaugare camp</div>
<div class="ml" style="top:46.80px">Entitate</div>
<div class="mv" style="top:58.90px">Angajat</div>
<div class="arr" style="top:64.40px"></div>
<div class="mu" style="top:73.00px"></div>
<div class="ml" style="top:86.90px">Operatii</div>
<div class="mv" style="top:98.60px">Inregistrare, Modificare, Corectie</div>
<div class="arr" style="top:104.10px"></div>
<div class="mu" style="top:113.10px"></div>
<div class="ml" style="top:125.80px">Denumire</div>
<div class="mv" style="top:137.90px">Serie si numar CI</div>
<div class="mu" style="top:152.20px"></div>
<div class="ml" style="top:165.30px">Tip camp</div>
<div class="mv" style="top:177.40px">Text</div>
<div class="arr" style="top:182.90px"></div>
<div class="mu" style="top:192.20px"></div>
<div class="a" style="left:32.69999999999999px;top:218.70px;width:10.6px;height:10.6px;border-radius:1.5px;background:#212121"></div>
<svg style="left:32.69999999999999px;top:218.70px" width="10.6" height="10.6" viewBox="0 0 24 24"><path fill="none" stroke="#fff" stroke-width="3" d="M5 12.5l4.5 4.5L19 7.5"/></svg>
<div class="a" style="left:50.80000000000001px;top:218px;font-size:9.4px;line-height:12px;color:#2b2b2b">Obligatoriu</div>
<div class="a" style="left:32.69999999999999px;top:268.70px;width:10.6px;height:10.6px;border-radius:1.5px;background:#212121"></div>
<svg style="left:32.69999999999999px;top:268.70px" width="10.6" height="10.6" viewBox="0 0 24 24"><path fill="none" stroke="#fff" stroke-width="3" d="M5 12.5l4.5 4.5L19 7.5"/></svg>
<div class="a" style="left:50.80000000000001px;top:268px;font-size:9.4px;line-height:12px;color:#2b2b2b">Activ</div>
<div class="a" style="left:292px;top:344px;font-size:8.3px;line-height:10px;font-weight:bold;color:#4a9ed6;letter-spacing:0.1px">RENUNTARE</div>
<div class="a" style="left:360px;top:344px;font-size:8.3px;line-height:10px;font-weight:bold;color:#4a9ed6;letter-spacing:0.1px">SALVEAZA</div>
</div>
</body></html>
